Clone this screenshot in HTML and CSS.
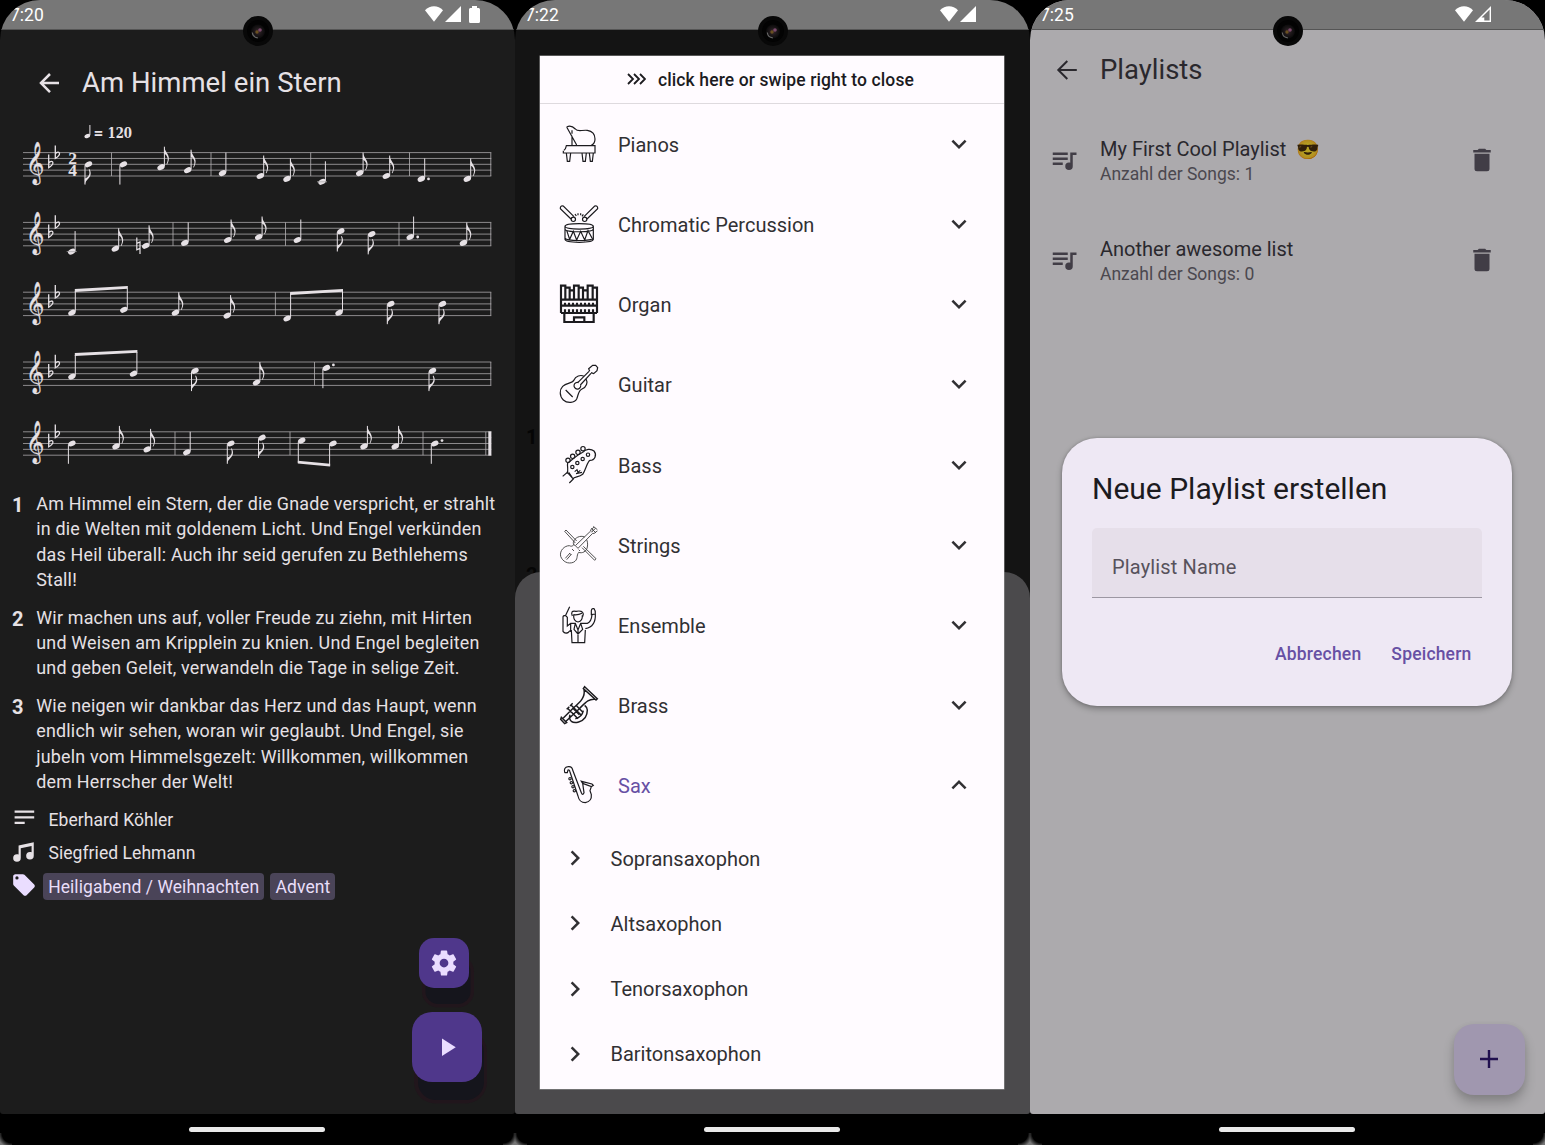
FILE: index.html
```html
<!DOCTYPE html>
<html lang="de">
<head>
<meta charset="utf-8">
<title>Liederbuch</title>
<link rel="stylesheet" href="styles.css">
</head>
<body>
<svg class="defs" width="0" height="0" aria-hidden="true">
  <defs>
    <ellipse id="head" rx="3.9" ry="2.6" transform="rotate(-27)"/>
    <g id="qu"><use href="#head"/><path class="stem" d="M3.4 -1V-20.5"/></g>
    <g id="qd"><use href="#head"/><path class="stem" d="M-3.5 1V20.3"/></g>
    <g id="eu"><use href="#qu"/><path d="M3.2 -20.5C3.8 -15.5 8.2 -13 7.9 -8.5C7.8 -6.3 7 -4.4 6.1 -2.8L5.4 -3C6.6 -5.5 7.2 -8 6.3 -10C5.5 -12 4.2 -13 3.2 -13.4Z"/></g>
    <g id="ed"><use href="#qd"/><path d="M-3.7 20.3C-3.2 15.5 2.4 14 2.2 9C2.1 7 1.5 5.8 .8 4.8L.2 5.2C1.2 7.5 1.2 9.5 .2 11.2C-.8 13 -2.4 13.5 -3.7 14.5Z"/></g>
    <path id="flat" class="flat" d="M0 -10V3C2.5 1.6 4.4 -.3 4.2 -2C4 -3.7 1.6 -3.6 0 -1.5"/>
    <g id="lines"><path class="line" d="M23 0H491.3M23 5.85H491.3M23 11.7H491.3M23 17.55H491.3M23 23.4H491.3"/>
      <text class="clef" transform="translate(25.6 22.3) scale(.86 1)">𝄞</text>
      <use href="#flat" x="48.7" y="12"/><use href="#flat" x="55.3" y="2.8"/></g>
    <path id="ledger" class="line" d="M-5 0H5"/>
    <symbol id="down" viewBox="0 0 24 24"><path d="M7.41,8.58L12,13.17L16.59,8.58L18,10L12,16L6,10L7.41,8.58Z"/></symbol>
    <symbol id="up" viewBox="0 0 24 24"><path d="M7.41,15.41L12,10.83L16.59,15.41L18,14L12,8L6,14L7.41,15.41Z"/></symbol>
    <symbol id="right" viewBox="0 0 24 24"><path d="M8.59,16.58L13.17,12L8.59,7.41L10,6L16,12L10,18L8.59,16.58Z"/></symbol>
    <symbol id="playlist" viewBox="0 0 24 24"><path d="M15,6H3V8H15V6M15,10H3V12H15V10M3,16H11V14H3V16M17,6V14.18C16.69,14.07 16.35,14 16,14A3,3 0 0,0 13,17A3,3 0 0,0 16,20A3,3 0 0,0 19,17V8H22V6H17Z"/></symbol>
    <symbol id="trash" viewBox="0 0 24 24"><path d="M19,4H15.5L14.5,3H9.5L8.5,4H5V6H19M6,19A2,2 0 0,0 8,21H16A2,2 0 0,0 18,19V7H6V19Z"/></symbol>
    <radialGradient id="lens"><stop offset="0" stop-color="#3c2832"/><stop offset=".5" stop-color="#1e181a"/><stop offset="1" stop-color="#0a0a0a"/></radialGradient>
    <symbol id="camera" viewBox="0 0 30 30"><circle cx="15" cy="15" r="15" fill="#080808"/><circle cx="15" cy="15" r="11" fill="#030303"/><circle cx="15" cy="15.5" r="7" fill="url(#lens)"/><path d="M9.3 16.5a6 6 0 0 0 5.5 5.3" fill="none" stroke="#666" stroke-width="1.2"/><circle cx="14" cy="16" r="1.7" fill="#6a5020"/><circle cx="17" cy="14" r="1.8" fill="#7b4a6c"/></symbol>
    <symbol id="wifi" viewBox="0 0 18 16"><path d="M0 4.2C5 -1.1 13 -1.1 18 4.2L9 15.8Z"/></symbol>
    <symbol id="signal" viewBox="0 0 16 16"><path d="M16 0V16H0Z"/></symbol>
    <symbol id="signal-low" viewBox="0 0 16 16"><path fill-rule="evenodd" d="M16 0V16H0ZM14.6 3.5L6.5 11.5H9.3V14.6H14.6Z"/></symbol>
  </defs>
</svg>

<main class="phones">
<section class="phone">
  <div class="screen song">
    <header class="status"><span>7:20</span><span class="status-icons"><svg width="18" height="16"><use href="#wifi"/></svg><svg width="16" height="16"><use href="#signal"/></svg><svg class="battery" width="11" height="17" viewBox="0 0 11 17"><path d="M3 0H8V2H9.6Q11 2 11 3.5V15.5Q11 17 9.5 17H1.5Q0 17 0 15.5V3.5Q0 2 1.4 2H3Z"/></svg></span></header>
    <div class="appbar appbar-song"><svg width="30" height="30" viewBox="0 0 24 24"><path d="M20,11V13H8L13.5,18.5L12.08,19.92L4.16,12L12.08,4.08L13.5,5.5L8,11H20Z"/></svg><h1>Am Himmel ein Stern</h1></div>
    <svg class="score" width="480" height="360" viewBox="20 115 480 360">
      <g transform="translate(87.3 136)"><ellipse rx="3" ry="2" transform="rotate(-25)"/><path class="stem" d="M2.6 -1V-11"/></g>
      <text class="tempo" x="93.5" y="137.6" textLength="38.5" lengthAdjust="spacingAndGlyphs">= 120</text>
      <g transform="translate(0 152.6)">
        <use href="#lines"/>
        <text class="meter" x="68.2" y="11.8">2</text><text class="meter" x="68.2" y="23.6">4</text>
        <path class="bar" d="M111.5 0V23.4M211 0V23.4M310.7 0V23.4M409.5 0V23.4M490.8 0V23.4"/>
        <use href="#ed" x="88.5" y="11.7"/><use href="#qd" x="123.4" y="11.7"/><use href="#eu" x="161" y="14.6"/><use href="#eu" x="187.7" y="17.6"/>
        <use href="#qu" x="222.5" y="20.5"/><use href="#eu" x="260.3" y="23.4"/><use href="#eu" x="287" y="26.3"/>
        <use href="#qu" x="322" y="29.2"/><use href="#ledger" x="322" y="29.2"/><use href="#eu" x="359.7" y="20.5"/><use href="#eu" x="386.3" y="23.4"/>
        <use href="#qu" x="421.3" y="26.3"/><circle cx="428.5" cy="26.3" r="1.4"/><use href="#eu" x="467.3" y="26.3"/>
      </g>
      <g transform="translate(0 222.4)">
        <use href="#lines"/>
        <path class="bar" d="M173 0V23.4M285.5 0V23.4M399 0V23.4M490.8 0V23.4"/>
        <use href="#qu" x="71.7" y="29.2"/><use href="#ledger" x="71.7" y="29.2"/><use href="#eu" x="115.3" y="26.3"/>
        <path class="natural" d="M136.8 15V27.5L140 26M140 31.5V19.5L136.8 21"/><use href="#eu" x="145.7" y="23.4"/>
        <use href="#qu" x="184.8" y="20.5"/><use href="#eu" x="227.7" y="17.6"/><use href="#eu" x="258.7" y="14.6"/>
        <use href="#qu" x="297.4" y="17.6"/><use href="#ed" x="340.8" y="8.8"/><use href="#ed" x="371.7" y="11.7"/>
        <use href="#qu" x="410.2" y="14.6"/><circle cx="417.7" cy="14.6" r="1.4"/><use href="#eu" x="463.4" y="20.5"/>
      </g>
      <g transform="translate(0 292.2)">
        <use href="#lines"/>
        <path class="bar" d="M275.4 0V23.4M490.8 0V23.4"/>
        <use href="#head" x="71.9" y="20.5"/><use href="#head" x="123.8" y="17.6"/><path class="stem" d="M75.3 19.5V-1M127.3 16.6V-4"/><path d="M74.8 -3.2L127.8 -6.2V-3.4L74.8 -.2Z"/>
        <use href="#eu" x="175.4" y="20.5"/><use href="#eu" x="227.2" y="23.4"/>
        <use href="#head" x="287.1" y="26.3"/><use href="#head" x="339" y="20.5"/><path class="stem" d="M290.6 25.3V1M342.5 19.5V-2"/><path d="M290.1 -.2L343 -3.2V-.4L290.1 2.8Z"/>
        <use href="#ed" x="390.8" y="11.7"/><use href="#ed" x="442.5" y="11.7"/>
      </g>
      <g transform="translate(0 362)">
        <use href="#lines"/>
        <path class="bar" d="M314.5 0V23.4M490.8 0V23.4"/>
        <use href="#head" x="71.9" y="14.6"/><use href="#head" x="133.5" y="11.7"/><path class="stem" d="M75.3 13.6V-7M136.9 10.7V-10"/><path d="M74.8 -8.9L137.4 -12V-9.2L74.8 -5.9Z"/>
        <use href="#ed" x="195" y="8.8"/><use href="#eu" x="256.5" y="20.5"/>
        <use href="#qd" x="326.4" y="5.9"/><circle cx="333.4" cy="2.9" r="1.4"/><use href="#ed" x="432.5" y="8.8"/>
      </g>
      <g transform="translate(0 431.8)">
        <use href="#lines"/>
        <path class="bar" d="M175 0V23.4M290 0V23.4M423 0V23.4M485.8 0V23.4"/><path d="M488.3 -.4H491.4V23.8H488.3Z"/>
        <use href="#qd" x="71.9" y="11.7"/><use href="#eu" x="116" y="14.6"/><use href="#eu" x="147.2" y="17.6"/>
        <use href="#qu" x="186.8" y="20.5"/><use href="#ed" x="230.8" y="11.7"/><use href="#ed" x="262" y="5.9"/>
        <use href="#head" x="301.7" y="8.8"/><use href="#head" x="333" y="11.7"/><path class="stem" d="M298.3 9.8V31M329.6 12.7V34"/><path d="M297.8 28.9L330.1 31.9V34.8L297.8 31.8Z"/>
        <use href="#eu" x="364" y="14.6"/><use href="#eu" x="395.2" y="14.6"/>
        <use href="#qd" x="434.8" y="11.7"/><circle cx="442" cy="8.8" r="1.4"/>
      </g>
    </svg>
    <ol class="verses">
      <li><b>1</b><p>Am Himmel ein Stern, der die Gnade verspricht, er strahlt<br>in die Welten mit goldenem Licht. Und Engel verkünden<br>das Heil überall: Auch ihr seid gerufen zu Bethlehems<br>Stall!</p></li>
      <li><b>2</b><p>Wir machen uns auf, voller Freude zu ziehn, mit Hirten<br>und Weisen am Kripplein zu knien. Und Engel begleiten<br>und geben Geleit, verwandeln die Tage in selige Zeit.</p></li>
      <li><b>3</b><p>Wie neigen wir dankbar das Herz und das Haupt, wenn<br>endlich wir sehen, woran wir geglaubt. Und Engel, sie<br>jubeln vom Himmelsgezelt: Willkommen, willkommen<br>dem Herrscher der Welt!</p></li>
    </ol>
    <div class="meta">
      <div class="meta-row"><svg width="26" height="26" viewBox="0 0 26 26"><path d="M3.6 4.4H23.2V6.8H3.6ZM3.6 10.2H23.2V12.5H3.6ZM3.6 15.7H13.7V18H3.6Z"/></svg><span>Eberhard Köhler</span></div>
      <div class="meta-row"><svg width="26" height="26" viewBox="0 0 24 24"><path d="M21,3V15.5A3.5,3.5 0 0,1 17.5,19A3.5,3.5 0 0,1 14,15.5A3.5,3.5 0 0,1 17.5,12C18.04,12 18.55,12.12 19,12.34V6.47L9,8.6V17.5A3.5,3.5 0 0,1 5.5,21A3.5,3.5 0 0,1 2,17.5A3.5,3.5 0 0,1 5.5,14C6.04,14 6.55,14.12 7,14.34V6L21,3Z"/></svg><span>Siegfried Lehmann</span></div>
      <div class="meta-row tags"><svg width="26" height="26" viewBox="0 0 24 24"><path d="M5.5,7A1.5,1.5 0 0,1 4,5.5A1.5,1.5 0 0,1 5.5,4A1.5,1.5 0 0,1 7,5.5A1.5,1.5 0 0,1 5.5,7M21.41,11.58L12.41,2.58C12.05,2.22 11.55,2 11,2H4C2.89,2 2,2.89 2,4V11C2,11.55 2.22,12.05 2.59,12.41L11.58,21.41C11.95,21.77 12.45,22 13,22C13.55,22 14.05,21.77 14.41,21.41L21.41,14.41C21.78,14.05 22,13.55 22,13C22,12.44 21.77,11.94 21.41,11.58Z"/></svg><span class="tag">Heiligabend / Weihnachten</span><span class="tag">Advent</span></div>
    </div>
    <div class="fabs">
      <button class="fab fab-small"><svg width="30" height="30" viewBox="0 0 24 24"><path d="M12,15.5A3.5,3.5 0 0,1 8.5,12A3.5,3.5 0 0,1 12,8.5A3.5,3.5 0 0,1 15.5,12A3.5,3.5 0 0,1 12,15.5M19.43,12.97C19.47,12.65 19.5,12.33 19.5,12C19.5,11.67 19.47,11.34 19.43,11L21.54,9.37C21.73,9.22 21.78,8.95 21.66,8.73L19.66,5.27C19.54,5.05 19.27,4.96 19.05,5.05L16.56,6.05C16.04,5.66 15.5,5.32 14.87,5.07L14.5,2.42C14.46,2.18 14.25,2 14,2H10C9.75,2 9.54,2.18 9.5,2.42L9.13,5.07C8.5,5.32 7.96,5.66 7.44,6.05L4.95,5.05C4.73,4.96 4.46,5.05 4.34,5.27L2.34,8.73C2.21,8.95 2.27,9.22 2.46,9.37L4.57,11C4.53,11.34 4.5,11.67 4.5,12C4.5,12.33 4.53,12.65 4.57,12.97L2.46,14.63C2.27,14.78 2.21,15.05 2.34,15.27L4.34,18.73C4.46,18.95 4.73,19.03 4.95,18.95L7.44,17.94C7.96,18.34 8.5,18.68 9.13,18.93L9.5,21.58C9.54,21.82 9.75,22 10,22H14C14.25,22 14.46,21.82 14.5,21.58L14.87,18.93C15.5,18.67 16.04,18.34 16.56,17.94L19.05,18.95C19.27,19.03 19.54,18.95 19.66,18.73L21.66,15.27C21.78,15.05 21.73,14.78 21.54,14.63L19.43,12.97Z"/></svg></button>
      <button class="fab fab-big"><svg width="30" height="30" viewBox="0 0 24 24"><path d="M8,5.14V19.14L19,12.14L8,5.14Z"/></svg></button>
    </div>
  </div>
  <footer class="nav"><i></i></footer>
  <svg class="camera" width="30" height="30"><use href="#camera"/></svg>
</section>

<section class="phone">
  <div class="screen instruments">
    <header class="status"><span>7:22</span><span class="status-icons"><svg width="18" height="16"><use href="#wifi"/></svg><svg width="16" height="16"><use href="#signal"/></svg></span></header>
    <span class="ghost ghost-1">1</span><span class="ghost ghost-2">2</span>
    <div class="sheet"></div>
    <div class="panel">
      <div class="close"><svg width="19" height="12" viewBox="0 0 19 12"><path d="M1 1L6 6L1 11M7 1L12 6L7 11M13 1L18 6L13 11"/></svg><span>click here or swipe right to close</span></div>
      <ul class="groups">
        <li><svg class="inst" viewBox="30 44 114 114"><path d="M50 50C58 46 68 48 76 56C84 66 96 58 112 60C126 62 135 72 135 86C135 96 130 102 124 105M50 50L80 104M66 76V104M66 60V70M42 120C48 116 47 112 49 106H135V128H40V121M49 128L52 153H59L62 128M96 128L99 153H106L109 128M118 128L121 153H127L130 128"/></svg><span>Pianos</span><svg class="chev"><use href="#down"/></svg></li>
        <li><svg class="inst" viewBox="30 285 114 114"><path d="M45 349C45 338 130 338 130 349C130 360 45 360 45 349V388C45 400 130 400 130 388V349M45 357C45 368 130 368 130 357M45 384C48 394 126 394 130 384M50 361L59 388L70 364L80 390L92 364L104 390L114 362L126 384M63 327L31 296Q30 286 40 288L72 320M111 327L143 296Q144 286 134 288L102 320M79 318L75 312M84 310V316M92 310V316M96 319L100 313"/><circle cx="70" cy="328" r="6.5"/><circle cx="104" cy="328" r="6.5"/></svg><span>Chromatic Percussion</span><svg class="chev"><use href="#down"/></svg></li>
        <li><svg class="inst bold" viewBox="30 525 114 114"><path d="M33 609V527H46V568M46 533H59V568M59 541H72V568M72 568V527H86V568M86 533H99V568M99 541H113V568M113 568V527H128V568M128 533H141V609M33 569H141M33 587H141M33 609H141M45 578V587M57 578V587M69 578V587M81 578V587M93 578V587M105 578V587M117 578V587M129 578V587M45 598V608M57 598V608M69 598V608M81 598V608M93 598V608M105 598V608M117 598V608M129 598V608M43 610V636H131V610M72 636V622H103V636"/></svg><span>Organ</span><svg class="chev"><use href="#down"/></svg></li>
        <li><svg class="inst" viewBox="30 766 114 114"><path d="M119 785L116 777L128 767H137L143 774L141 783L131 792L123 789M117 785L84 818M123 791L91 826M102 800C92 794 76 800 72 811C68 822 50 818 38 830C28 840 28 860 40 871C52 882 74 880 80 868C86 854 84 844 96 838C110 832 114 818 108 807M86 819A10 10 0 1 0 92 827M47 841L68 862"/></svg><span>Guitar</span><svg class="chev"><use href="#down"/></svg></li>
        <li><svg class="inst" viewBox="30 47 114 114"><path d="M53 98C62 92 82 74 98 66C108 56 122 54 132 62C142 74 134 90 120 90C112 92 108 118 98 132C86 142 74 138 68 146M53 98C50 112 58 120 50 130M38 138L52 126L70 146L58 158M56 126L66 140M74 124L81 118L84 126L91 120M78 130L96 126"/><circle cx="54" cy="90" r="6.5"/><circle cx="68" cy="78" r="6.5"/><circle cx="84" cy="66" r="6.5"/><circle cx="99" cy="55" r="6.5"/><circle cx="67" cy="110" r="5"/><circle cx="82" cy="98" r="5"/><circle cx="98" cy="86" r="5"/><circle cx="114" cy="73" r="5"/></svg><span>Bass</span><svg class="chev"><use href="#down"/></svg></li>
        <li><svg class="inst thin" viewBox="30 287 114 114"><path d="M122 302L76 346M128 309L84 354M76 346L84 354M122 302C120 294 130 296 132 290M128 309C134 312 136 304 142 302M124 294L138 308M130 288L142 298M126 304L136 294M124 306L132 298M104 320C90 314 74 322 70 336C74 346 66 350 58 346C44 346 28 360 32 378C38 394 54 402 70 396C86 388 78 376 86 366C96 370 110 364 112 350C114 342 112 332 110 328M48 299L80 332M44 303L76 338M48 299L44 303M96 352L134 390M100 348L138 385M134 390L138 385M46 384L60 368M50 388L64 372M66 356L72 362M58 368L64 374M70 340L74 346M86 358L90 362"/></svg><span>Strings</span><svg class="chev"><use href="#down"/></svg></li>
        <li><svg class="inst" viewBox="30 528 114 114"><path d="M59 530L46 558M39 564V604Q44 612 54 608L60 602M52 560V588L62 580H76L84 600L92 580H112Q124 576 126 554M136 552Q138 590 106 596M39 564Q38 556 46 556L52 562M124 554V542Q126 534 132 536Q138 544 136 552ZM71 556Q70 574 84 576Q98 574 97 556M67 558Q60 540 78 544Q98 540 100 552L98 560M70 554Q84 556 96 550M64 600L66 638H104L106 600M62 580V606M84 598V638M76 580L72 598L84 612L98 598L92 580"/></svg><span>Ensemble</span><svg class="chev"><use href="#down"/></svg></li>
        <li><svg class="inst medium" viewBox="30 768 114 114"><path d="M104 770L142 806L138 810L100 776ZM102 778C106 800 94 814 70 834L40 864M136 808C116 806 108 816 88 836L48 874M34 862L50 878L44 881L32 868ZM52 834L84 866M62 824L94 856M50 838L58 830M60 828L68 820M60 854Q56 866 64 874Q72 880 86 876Q112 868 112 840Q112 832 104 826M76 866Q96 862 100 842M68 834L88 854M78 826L98 846"/></svg><span>Brass</span><svg class="chev"><use href="#down"/></svg></li>
        <li class="open"><svg class="inst" viewBox="30 1008 114 114"><path d="M44 1028Q40 1012 54 1010Q66 1008 68 1020L94 1088Q98 1098 102 1088L98 1060L94 1054L126 1062L130 1066L124 1070L98 1060M44 1028L52 1028L54 1020Q58 1018 60 1026L84 1098Q88 1118 106 1118Q126 1114 124 1094L120 1082L124 1070"/><circle cx="60" cy="1046" r="3.5"/><circle cx="64" cy="1058" r="3.5"/><circle cx="69" cy="1070" r="3.5"/><circle cx="73" cy="1082" r="3.5"/></svg><span>Sax</span><svg class="chev"><use href="#up"/></svg></li>
      </ul>
      <ul class="subs">
        <li><svg><use href="#right"/></svg>Sopransaxophon</li>
        <li><svg><use href="#right"/></svg>Altsaxophon</li>
        <li><svg><use href="#right"/></svg>Tenorsaxophon</li>
        <li><svg><use href="#right"/></svg>Baritonsaxophon</li>
      </ul>
    </div>
  </div>
  <footer class="nav"><i></i></footer>
  <svg class="camera" width="30" height="30"><use href="#camera"/></svg>
</section>

<section class="phone">
  <div class="screen playlists">
    <header class="status"><span>7:25</span><span class="status-icons"><svg width="18" height="16"><use href="#wifi"/></svg><svg width="16" height="16"><use href="#signal-low"/></svg></span></header>
    <div class="appbar appbar-lists"><svg width="30" height="30" viewBox="0 0 30 30"><path class="arrow" d="M24.8 15H6.8M15.3 6L6.3 15L15.3 24"/></svg><h1>Playlists</h1></div>
    <ul class="lists">
      <li><svg><use href="#playlist"/></svg><div><h2>My First Cool Playlist <span class="emoji">😎</span></h2><p>Anzahl der Songs: 1</p></div><svg><use href="#trash"/></svg></li>
      <li><svg><use href="#playlist"/></svg><div><h2>Another awesome list</h2><p>Anzahl der Songs: 0</p></div><svg><use href="#trash"/></svg></li>
    </ul>
    <div class="add"><svg width="18" height="18" viewBox="0 0 18 18"><path d="M9 0V18M0 9H18"/></svg></div>
    <div class="dialog">
      <h2>Neue Playlist erstellen</h2>
      <div class="field">Playlist Name</div>
      <div class="actions"><span>Abbrechen</span><span>Speichern</span></div>
    </div>
  </div>
  <footer class="nav"><i></i></footer>
  <svg class="camera" width="30" height="30"><use href="#camera"/></svg>
</section>
</main>
</body>
</html>
```
FILE: styles.css
```css
* { box-sizing: border-box; margin: 0; padding: 0; }
body { background: #000; font-family: Roboto, sans-serif; font-size: 20px; overflow: hidden; }
ul, ol { list-style: none; }
svg { display: block; flex: none; fill: currentColor; }
.defs { position: absolute; }
h1, h2 { font-weight: 400; white-space: nowrap; }

.phones { display: grid; grid-template-columns: repeat(3, 515px); }
.phone { position: relative; display: flex; flex-direction: column; height: 1145px; overflow: hidden; background: #000; }
.phone::before, .phone::after { content: ""; position: absolute; bottom: 0; width: 12px; height: 12px; }
.phone::before { left: 0; background: radial-gradient(circle at 100% 0, transparent 10px, #777 15px); }
.phone::after { right: 0; background: radial-gradient(circle at 0 0, transparent 10px, #777 15px); }
.screen { position: relative; height: 1114px; overflow: hidden; border-radius: 40px 40px 3px 3px; display: flex; flex-direction: column; }
.nav { flex: 1; display: flex; justify-content: center; padding: 13px 1.5px 0 0; }
.nav i { width: 136px; height: 5px; border-radius: 3px; background: #e9e9e9; }
.camera { position: absolute; left: 243px; top: 16px; }

.status { flex: none; display: flex; justify-content: space-between; height: 30px; padding: 5px 72px 0 10px; background: #777; border-bottom: 1px solid #555; color: #fff; font-size: 17.5px; line-height: 21px; }
.status-icons { display: flex; gap: 2px; padding-top: 1px; width: 18px; justify-content: flex-start; }
.status-icons .battery { margin-left: 6px; }

.song { background: #1c1c1c; color: #e6e1e5; }
.appbar { display: flex; align-items: center; flex: none; }
.appbar h1 { font-size: 27.5px; line-height: 36px; }
.appbar-song { gap: 17.6px; margin: 35px 0 0 34.4px; height: 36px; }
.appbar-song h1 { letter-spacing: .03px; }
.score { margin: 14px 0 0 20px; }
.stem { fill: none; stroke: currentColor; stroke-width: 1; }
.line { fill: none; stroke: #aaa7aa; stroke-width: .8; }
.bar { fill: none; stroke: #b5b2b5; stroke-width: .8; }
.flat { fill: none; stroke: currentColor; stroke-width: 1.3; }
.natural { fill: none; stroke: currentColor; stroke-width: 1.2; }
.clef { font-size: 35.8px; stroke: currentColor; stroke-width: .3; }
.meter { font: 700 17.5px "Liberation Serif", serif; }
.tempo { font: 700 15px "DejaVu Serif", serif; }

.verses { margin: 16.1px 0 0 12px; display: flex; flex-direction: column; gap: 12.6px; }
.verses li { display: grid; grid-template-columns: 24.3px auto; }
.verses b { font-size: 20px; line-height: 29px; }
.verses p { font-size: 17.9px; line-height: 25.25px; letter-spacing: .19px; white-space: nowrap; }
.meta { margin: 9.7px 0 0 11.3px; font-size: 17.5px; letter-spacing: .06px; }
.meta-row { display: flex; align-items: center; height: 33px; }
.meta-row > svg { margin-right: 11.2px; margin-top: -2.5px; }
.tags { color: #eaddff; }
.tags > svg { margin-right: 5.7px; }
.tag { height: 27px; line-height: 28px; padding: 0 5.2px; margin-right: 6px; border-radius: 4px; background: #4a4458; color: #e8def8; }
.fabs { position: absolute; left: 412px; top: 938px; display: flex; flex-direction: column; align-items: center; gap: 23.5px; }
.fab { display: grid; place-items: center; border: 0; background: #4f378b; color: #eaddff; }
.fab-small { width: 50px; height: 50px; border-radius: 15px; margin-right: 6px; box-shadow: 4px 18.5px 0 -2.5px #15151c, 4px 18.5px 0 1px #21161c; }
.fab-big { width: 70px; height: 70.5px; border-radius: 20px; box-shadow: 4px 20px 0 -2px #15151c, 3.5px 20px 0 1.5px #21161c; }
.fab-big svg { margin-left: -.5px; }

.instruments { background: #141414; color: #1c1b1f; }
.sheet { position: absolute; inset: 572px 0 0; border-radius: 26px 26px 0 0; background: #4b4a4c; }
.ghost { position: absolute; left: 11px; color: #050505; font-size: 20px; font-weight: 700; line-height: 24px; }
.ghost-1 { top: 425px; }
.ghost-2 { top: 563px; }
.panel { position: relative; width: 464px; height: 1033px; margin: 25.5px 0 0 25px; background: #fffbff; box-shadow: 0 0 0 .5px #999; }
.close { display: flex; align-items: center; justify-content: center; gap: 12px; height: 48.5px; border-bottom: 1px solid #dedade; font-size: 17.5px; font-weight: 500; letter-spacing: .11px; padding: 2.4px 3px 0 0; }
.close svg { margin-top: -3px; }
.close path { fill: none; stroke: #1c1b1f; stroke-width: 1.8; }
.groups { padding-top: 1px; }
.groups li { display: flex; align-items: center; height: 80.15px; padding: 0 30.4px 0 20px; color: #313033; }
.groups span { flex: 1; padding-left: 20px; }
.inst { width: 38px; height: 38px; margin-top: -2px; fill: none; stroke: #1c1b1f; stroke-width: 3.6; overflow: visible; }
.inst.bold { stroke-width: 6.5; }
.inst.thin { stroke: #444; stroke-width: 2.8; }
.inst.medium { stroke-width: 4.4; }
.chev { width: 30px; height: 30px; margin-top: -2px; }
.groups .open span { color: #6750a4; }
.subs li { display: flex; align-items: center; gap: 20.5px; height: 65.15px; padding-left: 20px; color: #313033; }
.subs svg { width: 30px; height: 30px; margin-top: -1px; }

.playlists { background: #acaaad; color: #2a282d; }
.appbar-lists { gap: 18px; margin: 22px 0 0 22px; height: 36px; }
.arrow { fill: none; stroke: currentColor; stroke-width: 2; }
.lists { padding: 22px 48px 0 20px; }
.lists li { display: flex; align-items: center; height: 100px; color: #413d46; }
.lists svg { width: 30px; height: 30px; }
.lists li > svg:first-child { margin-left: -.7px; margin-right: .7px; }
.lists div { flex: 1; padding: 2px 0 0 20px; }
.lists h2 { font-size: 20px; line-height: 26px; color: #2a282d; }
.lists p { font-size: 17.5px; line-height: 24px; color: #4b484f; }
.emoji { font: 19px "Noto Color Emoji"; line-height: 20px; margin-left: 5px; filter: brightness(.72); display: inline-block; }
.add { position: absolute; left: 424px; top: 1024px; width: 70.5px; height: 70.5px; border-radius: 20px; display: grid; place-items: center; background: #a097af; box-shadow: 0 8px 12px rgba(0, 0, 0, .2), 0 2px 6px rgba(0, 0, 0, .08); }
.add path { stroke: #21104f; stroke-width: 2.4; }
.dialog { position: absolute; left: 32px; top: 438px; width: 450px; height: 268px; padding: 30px; border-radius: 35px; background: #eee8f4; box-shadow: 0 3px 6px rgba(0, 0, 0, .28), 0 0 3px rgba(0, 0, 0, .2); }
.dialog h2 { font-size: 30px; line-height: 40px; color: #1c1b1f; margin-top: 1px; }
.field { height: 70px; margin-top: 19px; padding-left: 20px; border-radius: 5px 5px 0 0; border-bottom: 1.5px solid #9c97a2; background: #e6dfea; color: #57525c; line-height: 78px; letter-spacing: .15px; }
.actions { display: flex; justify-content: flex-end; gap: 30px; padding: 45px 10.5px 0 0; color: #6750a4; font-size: 17.5px; font-weight: 500; line-height: 22px; letter-spacing: .19px; }
```
